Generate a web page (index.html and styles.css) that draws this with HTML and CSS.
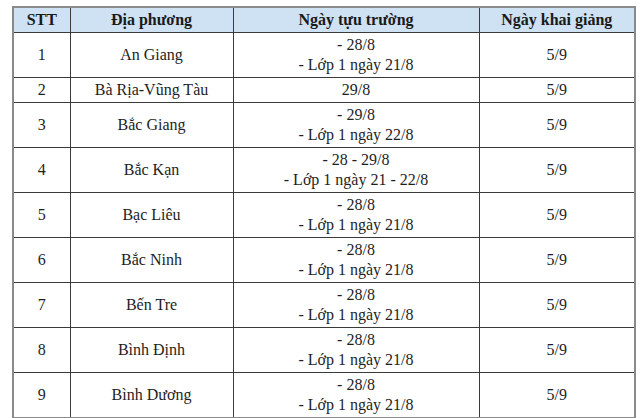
FILE: index.html
```html
<!DOCTYPE html>
<html lang="vi">
<head>
<meta charset="utf-8">
<link rel="stylesheet" href="styles.css">
</head>
<body>
<div class="wrap">
<table class="schedule">
  <colgroup>
    <col class="c1"><col class="c2"><col class="c3"><col class="c4">
  </colgroup>
  <thead>
    <tr><th>STT</th><th>Địa phương</th><th>Ngày tựu trường</th><th>Ngày khai giảng</th></tr>
  </thead>
  <tbody>
    <tr><td>1</td><td>An Giang</td><td>- 28/8<br>- Lớp 1 ngày 21/8</td><td>5/9</td></tr>
    <tr><td>2</td><td>Bà Rịa-Vũng Tàu</td><td>29/8</td><td>5/9</td></tr>
    <tr><td>3</td><td>Bắc Giang</td><td>- 29/8<br>- Lớp 1 ngày 22/8</td><td>5/9</td></tr>
    <tr><td>4</td><td>Bắc Kạn</td><td>- 28 - 29/8<br>- Lớp 1 ngày 21 - 22/8</td><td>5/9</td></tr>
    <tr><td>5</td><td>Bạc Liêu</td><td>- 28/8<br>- Lớp 1 ngày 21/8</td><td>5/9</td></tr>
    <tr><td>6</td><td>Bắc Ninh</td><td>- 28/8<br>- Lớp 1 ngày 21/8</td><td>5/9</td></tr>
    <tr><td>7</td><td>Bến Tre</td><td>- 28/8<br>- Lớp 1 ngày 21/8</td><td>5/9</td></tr>
    <tr><td>8</td><td>Bình Định</td><td>- 28/8<br>- Lớp 1 ngày 21/8</td><td>5/9</td></tr>
    <tr><td>9</td><td>Bình Dương</td><td>- 28/8<br>- Lớp 1 ngày 21/8</td><td>5/9</td></tr>
  </tbody>
</table>
</div>
</body>
</html>
```
FILE: styles.css
```css
html, body {
  margin: 0;
  padding: 0;
  background: #ffffff;
  overflow: hidden;
}
.wrap {
  padding: 6px 0 0 12px;
}
.schedule {
  border-collapse: collapse;
  width: 622px;
  table-layout: fixed;
  font-family: "Liberation Serif", "Times New Roman", serif;
  font-size: 16px;
  color: #1e1e1e;
  border: 2px solid #8a8a8a;
}
.c1 { width: 57px; }
.c2 { width: 163px; }
.c3 { width: 246px; }
.c4 { width: 156px; }
.schedule th,
.schedule td {
  border: 1px solid #3a3a3a;
  text-align: center;
  vertical-align: middle;
  line-height: 20px;
  padding: 2px 4px;
}
.schedule th {
  background: #cfe2f3;
  font-weight: bold;
  color: #1a1a1a;
}
.schedule tbody tr {
  height: 45px;
}
.schedule tbody tr:nth-child(2) {
  height: 25px;
}
```
